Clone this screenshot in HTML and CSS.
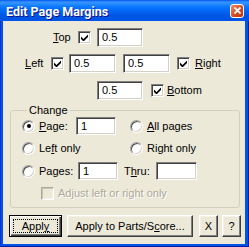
FILE: index.html
```html
<!DOCTYPE html>
<html lang="en">
<head>
    <meta charset="UTF-8">
    <title>Edit Page Margins</title>
    <link rel="stylesheet" href="styles.css">
</head>
<body>
    <div class="window">
        <div class="titlebar">
            <span class="title">Edit Page Margins</span>
            <span class="close">
                <svg width="7" height="7" viewBox="0 0 7 7"><path d="M0.5 0.5 L6.5 6.5 M6.5 0.5 L0.5 6.5" stroke="#fff" stroke-width="1.8"/></svg>
            </span>
        </div>

        <div class="content">
            <div class="row row-top">
                <span class="lbl lbl-top"><u>T</u>op</span>
                <span class="check"><svg width="7" height="7" viewBox="0 0 7 7"><path d="M0 2.5 L2.5 5 L7 0.5 V3 L2.5 7.5 L0 5 Z" fill="#000"/></svg></span>
                <span class="field w46">0.5</span>
            </div>

            <div class="row row-left">
                <span class="lbl lbl-left"><u>L</u>eft</span>
                <span class="check"><svg width="7" height="7" viewBox="0 0 7 7"><path d="M0 2.5 L2.5 5 L7 0.5 V3 L2.5 7.5 L0 5 Z" fill="#000"/></svg></span>
                <span class="field w47 f-left">0.5</span>
                <span class="field w47 f-right">0.5</span>
                <span class="check c-right"><svg width="7" height="7" viewBox="0 0 7 7"><path d="M0 2.5 L2.5 5 L7 0.5 V3 L2.5 7.5 L0 5 Z" fill="#000"/></svg></span>
                <span class="lbl l-right"><u>R</u>ight</span>
            </div>

            <div class="row row-bottom">
                <span class="field w46 f-bottom">0.5</span>
                <span class="check c-bottom"><svg width="7" height="7" viewBox="0 0 7 7"><path d="M0 2.5 L2.5 5 L7 0.5 V3 L2.5 7.5 L0 5 Z" fill="#000"/></svg></span>
                <span class="lbl l-bottom"><u>B</u>ottom</span>
            </div>

            <fieldset class="group">
                <legend>Change</legend>

                <div class="grow grow-a">
                    <div class="opt">
                        <span class="radio on"></span>
                        <span class="lbl l-page"><u>P</u>age:</span>
                        <span class="field w40">1</span>
                    </div>
                    <div class="opt">
                        <span class="radio"></span>
                        <span class="lbl"><u>A</u>ll pages</span>
                    </div>
                </div>

                <div class="grow grow-b">
                    <div class="opt">
                        <span class="radio"></span>
                        <span class="lbl">Le<u>f</u>t only</span>
                    </div>
                    <div class="opt">
                        <span class="radio"></span>
                        <span class="lbl">Right only</span>
                    </div>
                </div>

                <div class="grow grow-c">
                    <span class="radio"></span>
                    <span class="lbl l-pages">Pages:</span>
                    <span class="field w40">1</span>
                    <span class="lbl l-thru">T<u>h</u>ru:</span>
                    <span class="field w41"></span>
                </div>

                <div class="grow grow-d">
                    <span class="check disabled"></span>
                    <span class="lbl muted">Adjust left or right only</span>
                </div>
            </fieldset>

            <div class="buttons">
                <button class="btn btn-default"><span class="focus">Appl<u>y</u></span></button>
                <button class="btn btn-parts">Apply to Parts/S<u>c</u>ore...</button>
                <button class="btn btn-small">X</button>
                <button class="btn btn-small btn-help">?</button>
            </div>
        </div>
    </div>
</body>
</html>
```

FILE: styles.css
```css
body {
    margin: 0;
    background: #ece9d8;
    font-family: "Liberation Sans", Arial, sans-serif;
    font-size: 11px;
    color: #000;
}

.window {
    width: 249px;
    height: 247px;
    box-sizing: border-box;
    padding: 0 4px 3px 3px;
    background: #0054e3;
    box-shadow: inset 1px 0 #0831d9, inset -1px -1px #001ea0;
    display: flex;
    flex-direction: column;
}

.titlebar {
    height: 21px;
    margin: 0 -4px 0 -3px;
    padding-left: 6px;
    display: flex;
    align-items: center;
    background: linear-gradient(to bottom, #0058ee 0%, #3a93ff 10%, #288eff 18%, #127dff 28%, #036ffc 42%, #0262ee 58%, #0057e5 72%, #0054e3 86%, #0055eb 100%);
}

.title {
    font-family: Roboto, "Liberation Sans", sans-serif;
    font-weight: bold;
    font-size: 12.5px;
    color: #fff;
    text-shadow: 1px 1px #0f1089;
    padding-top: 1px;
}

.close {
    margin-left: auto;
    margin-right: 5px;
    width: 14px;
    height: 14px;
    box-sizing: border-box;
    border: 1px solid #fff;
    border-radius: 3px;
    background: linear-gradient(135deg, #f08a62, #d4461c 60%, #c1370e);
    display: flex;
    align-items: center;
    justify-content: center;
}

.content {
    flex: 1;
    background: #ece9d8;
}

.row {
    display: flex;
    align-items: center;
    height: 19px;
}

.row-top { margin-top: 7px; }
.row-left { margin-top: 7px; }
.row-bottom { margin-top: 8px; }

.lbl {
    white-space: nowrap;
    line-height: 13px;
}

.lbl-top { margin-left: 50px; width: 19px; }
.lbl-left { margin-left: 22px; width: 19px; }

.check {
    width: 13px;
    height: 13px;
    box-sizing: border-box;
    flex: none;
    background: #fff;
    border: 1px solid;
    border-color: #808080 #fff #fff #808080;
    box-shadow: inset 1px 1px #404040, inset -1px -1px #d4d0c8;
    display: flex;
    align-items: center;
    justify-content: center;
}

.row-top .check { margin-left: 6px; }
.row-left .check { margin-left: 7px; }

.check.disabled {
    background: #ece9d8;
    border-color: #aca899 #fff #fff #aca899;
    box-shadow: inset 1px 1px #c8c5b4, inset -1px -1px #f4f2e8;
}

.field {
    box-sizing: border-box;
    height: 19px;
    flex: none;
    padding: 0 4px;
    line-height: 17px;
    background: #fff;
    border: 1px solid;
    border-color: #808080 #fff #fff #808080;
    box-shadow: inset 1px 1px #404040, inset -1px -1px #d4d0c8;
}

.w40 { width: 40px; height: 18px; line-height: 16px; }
.w41 { width: 41px; height: 18px; }
.w46 { width: 46px; }
.w47 { width: 47px; }

.row-top .field { margin-left: 6px; }
.f-left { margin-left: 5px; }
.f-right { margin-left: 7px; }
.c-right { margin-left: 7px; }
.l-right { margin-left: 5px; }

.f-bottom { margin-left: 94px; }
.c-bottom { margin-left: 8px; }
.l-bottom { margin-left: 3px; }

.group {
    margin: 4px 0 0 7px;
    width: 230px;
    box-sizing: border-box;
    padding: 0 0 5px 11px;
    border: 1px solid #d0d0bf;
    border-radius: 3px;
}

.group legend {
    margin-left: 5px;
    padding: 0 2px;
    line-height: 13px;
}

.grow {
    display: flex;
    align-items: center;
    height: 18px;
}

.grow-b { margin-top: 4px; }
.grow-c { margin-top: 5px; }
.grow-d { margin-top: 4px; }

.opt {
    display: flex;
    align-items: center;
    width: 108px;
}

.radio {
    width: 13px;
    height: 13px;
    box-sizing: border-box;
    flex: none;
    border-radius: 50%;
    background: #fff;
    border: 1px solid;
    border-color: #a0a0a0 #fff #fff #a0a0a0;
    box-shadow: inset 1px 1px #505050, inset -1px -1px #d4d0c8;
    display: flex;
    align-items: center;
    justify-content: center;
    margin-right: 4px;
}

.radio.on::after {
    content: '';
    width: 4px;
    height: 4px;
    border-radius: 50%;
    background: #000;
}

.l-page { width: 37px; }
.l-pages { width: 39px; }
.l-thru { margin-left: 6px; width: 32px; }

.grow-d .check { margin-left: 19px; margin-right: 4px; }

.muted {
    color: #aca899;
    text-shadow: 1px 1px #fff;
}

.buttons {
    display: flex;
    margin-top: 7px;
    padding-left: 6px;
}

.btn {
    height: 22px;
    box-sizing: border-box;
    padding: 0;
    font: inherit;
    color: #000;
    background: #ece9d8;
    border: 1px solid;
    border-color: #fff #404040 #404040 #fff;
    box-shadow: inset -1px -1px #808080, inset 1px 1px #f4f2e8;
    border-radius: 0;
}

.btn-default {
    width: 53px;
    border-color: #000;
    box-shadow: inset 1px 1px #fff, inset -1px -1px #404040, inset -2px -2px #808080;
    display: flex;
    padding: 3px;
}

.focus {
    flex: 1;
    border: 1px dotted #000;
    line-height: 12px;
}

.btn-parts { width: 126px; margin-left: 5px; }
.btn-small { width: 19px; margin-left: 6px; }
.btn-help { margin-left: 4px; }
```
